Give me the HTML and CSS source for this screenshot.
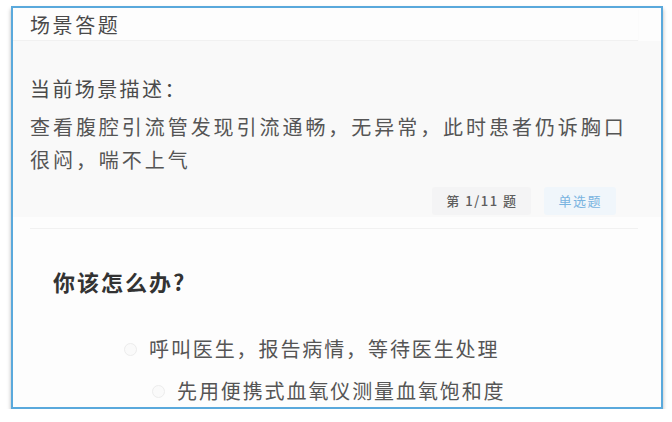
FILE: index.html
```html
<!DOCTYPE html>
<html lang="zh-CN">
<head>
<meta charset="utf-8">
<link rel="stylesheet" href="styles.css">
</head>
<body>
<div class="frame">
  <div class="header">场景答题</div>
  <div class="scene">
    <div class="scene-label">当前场景描述：</div>
    <div class="scene-text">查看腹腔引流管发现引流通畅，无异常，此时患者仍诉胸口很闷，喘不上气</div>
    <div class="meta">
      <span class="pill pill-count">第 1/11 题</span>
      <span class="pill pill-type">单选题</span>
    </div>
  </div>
  <div class="divider"></div>
  <div class="question">你该怎么办?</div>
  <div class="options">
    <div class="option option-a"><span class="radio"></span><span class="opt-text">呼叫医生，报告病情，等待医生处理</span></div>
    <div class="option option-b"><span class="radio"></span><span class="opt-text">先用便携式血氧仪测量血氧饱和度</span></div>
  </div>
</div>
</body>
</html>
```

FILE: styles.css
```css
html, body {
  margin: 0;
  padding: 0;
  background: #ffffff;
}
body {
  font-family: "Noto Sans CJK SC", "Noto Sans", sans-serif;
  color: #555;
}
.frame {
  margin: 6px 0 0 11px;
  width: 648px;
  height: 399px;
  border: 2px solid #5aa9dc;
  background: #fdfdfd;
  box-shadow: 0 3px 4px rgba(0, 0, 0, 0.3);
  overflow: hidden;
}
.header {
  height: 30px;
  margin: 0 23px 0 0;
  padding: 2px 0 0 17px;
  font-size: 20px;
  line-height: 30px;
  letter-spacing: 2.6px;
  color: #4a4a4a;
  border-bottom: 1px solid #f1f1f1;
  box-shadow: 0 1px 2px rgba(0, 0, 0, 0.03);
}
.scene {
  background: #f9f9f9;
  padding: 33px 23px 0 17px;
  height: 143px;
}
.scene-label {
  font-size: 20px;
  line-height: 30px;
  letter-spacing: 2.4px;
  color: #4a4a4a;
}
.scene-text {
  margin-top: 6px;
  font-size: 20px;
  line-height: 33px;
  letter-spacing: 2.95px;
  color: #555;
}
.meta {
  display: flex;
  justify-content: flex-end;
  gap: 13px;
  margin-top: 11px;
  padding-right: 22px;
}
.pill {
  font-size: 13px;
  line-height: 28px;
  height: 28px;
  padding: 0 14px;
  letter-spacing: 1.5px;
  border-radius: 3px;
}
.pill-count {
  background: #f4f4f5;
  color: #5e5e5e;
  font-weight: 500;
}
.pill-type {
  background: #f0f6fb;
  color: #7ab4e0;
}
.divider {
  margin: 11px 23px 0 17px;
  border-top: 1px solid #f1f1f1;
}
.question {
  margin: 37px 0 0 40px;
  font-size: 22px;
  line-height: 30px;
  font-weight: 700;
  letter-spacing: 2px;
  color: #333;
}
.options {
  margin-top: 39px;
  display: flex;
  flex-direction: column;
  gap: 14px;
}
.option {
  display: flex;
  align-items: center;
  gap: 12px;
  font-size: 20px;
  line-height: 28px;
  letter-spacing: 1.9px;
  color: #555;
}
.option-a {
  margin-left: 111px;
}
.option-b {
  margin-left: 139px;
}
.radio {
  width: 11px;
  height: 11px;
  border: 1px solid #ececec;
  border-radius: 50%;
  background: #fafafa;
  flex: none;
}
```
